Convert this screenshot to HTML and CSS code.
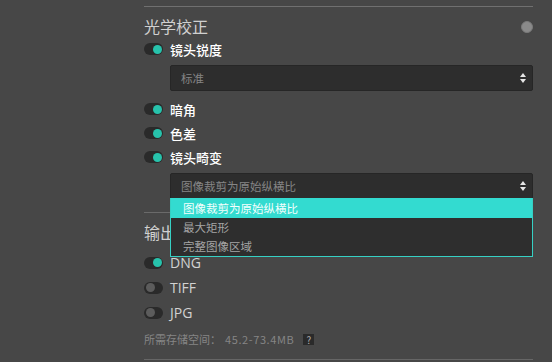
FILE: index.html
```html
<!DOCTYPE html>
<html lang="zh-CN">
<head>
    <meta charset="UTF-8">
    <meta name="viewport" content="width=device-width, initial-scale=1.0">
    <title>导出设置</title>
    <link rel="stylesheet" href="styles.css">
</head>
<body>
  <div class="panel">
    <div class="rule"></div>

    <div class="section_head">
      <h2>光学校正</h2>
      <span class="help_dot"></span>
    </div>

    <div class="row">
      <span class="toggle on"></span>
      <span class="label">镜头锐度</span>
    </div>
    <div class="select">
      <span>标准</span>
      <svg class="arrows" width="6" height="10" viewBox="0 0 6 10"><path d="M3 0 L6 4 H0 Z M3 10 L0 6 H6 Z" fill="#e6e6e6"/></svg>
    </div>

    <div class="row first">
      <span class="toggle on"></span>
      <span class="label">暗角</span>
    </div>
    <div class="row">
      <span class="toggle on"></span>
      <span class="label">色差</span>
    </div>
    <div class="row">
      <span class="toggle on"></span>
      <span class="label">镜头畸变</span>
    </div>
    <div class="select open">
      <span>图像裁剪为原始纵横比</span>
      <svg class="arrows" width="6" height="10" viewBox="0 0 6 10"><path d="M3 0 L6 4 H0 Z M3 10 L0 6 H6 Z" fill="#e6e6e6"/></svg>
      <ul class="menu">
        <li class="active">图像裁剪为原始纵横比</li>
        <li>最大矩形</li>
        <li>完整图像区域</li>
      </ul>
    </div>

    <div class="rule mid"></div>
    <div class="section_head">
      <h2>输出</h2>
    </div>

    <div class="row wide">
      <span class="toggle on"></span>
      <span class="label latin">DNG</span>
    </div>
    <div class="row wide">
      <span class="toggle"></span>
      <span class="label latin">TIFF</span>
    </div>
    <div class="row wide">
      <span class="toggle"></span>
      <span class="label latin">JPG</span>
    </div>

    <p class="storage">所需存储空间： <span class="size">45.2-73.4MB</span> <span class="qbox">?</span></p>

    <div class="rule bottom"></div>
  </div>
</body>
</html>
```

FILE: styles.css
```css
* {
  margin: 0;
  padding: 0;
  box-sizing: border-box;
}

body {
  width: 552px;
  height: 362px;
  overflow: hidden;
  background-color: #474747;
  font-family: "Noto Sans CJK SC", "Noto Sans", sans-serif;
  color: #e8e8e8;
}

.panel {
  margin-left: 144px;
  width: 389px;
  padding-top: 6px;
}

.rule {
  height: 1px;
  background-color: #707070;
}
.rule.mid {
  margin-top: 13px;
  background-color: #6a6a6a;
}
.rule.bottom {
  margin-top: 11px;
  background-color: #666;
}

.section_head {
  margin-top: 8px;
  height: 22px;
  display: flex;
  align-items: center;
  justify-content: space-between;
}
.section_head h2 {
  font-size: 16px;
  font-weight: normal;
  line-height: 22px;
  color: #d0d0d0;
}
.help_dot {
  width: 12px;
  height: 12px;
  border-radius: 50%;
  background-color: #8a8a8a;
  border: 1px solid #7a7a7a;
  margin-top: 1px;
}

.row {
  height: 24px;
  display: flex;
  align-items: center;
  gap: 7px;
}
.row.first {
  margin-top: 6px;
}
.row.wide {
  height: 25px;
}
.section_head + .row.wide {
  margin-top: 7px;
}

.toggle {
  position: relative;
  width: 19px;
  height: 12px;
  border-radius: 6px;
  background-color: #2a2a2a;
}
.toggle::after {
  content: "";
  position: absolute;
  top: 1.5px;
  left: 1.5px;
  width: 9px;
  height: 9px;
  border-radius: 50%;
  background-color: #5c5c5c;
}
.toggle.on::after {
  left: auto;
  right: 1px;
  background-color: #27c3ac;
}

.label {
  font-size: 13px;
  font-weight: 500;
  color: #ffffff;
}
.label.latin {
  font-family: "Open Sans", "Noto Sans", sans-serif;
  font-size: 14px;
  font-weight: normal;
  color: #d2d2d2;
}

.select {
  position: relative;
  margin-top: 4px;
  margin-left: 26px;
  height: 26px;
  padding: 0 6px 0 10px;
  display: flex;
  align-items: center;
  justify-content: space-between;
  background-color: #2d2d2d;
  border: 1px solid #262626;
  border-radius: 2px;
  font-size: 11.5px;
  color: #858585;
}
.select.open {
  border-radius: 2px 2px 0 0;
}

.menu {
  position: absolute;
  top: 24px;
  left: -1px;
  right: -1px;
  list-style: none;
  background-color: #2e2e2e;
  border: 1px solid #36d0c4;
  border-top: none;
  z-index: 2;
}
.menu li {
  height: 19px;
  line-height: 19px;
  padding-left: 12px;
  font-size: 11.5px;
  color: #a5a5a5;
}
.menu li.active {
  height: 20px;
  line-height: 20px;
  background-color: #33dbd0;
  color: #f2fffd;
}

.storage {
  margin-top: 5px;
  height: 18px;
  display: flex;
  align-items: center;
  font-size: 11px;
  color: #858585;
}
.storage .size {
  margin-left: 4px;
  letter-spacing: 0.6px;
}
.storage .qbox {
  margin-left: 9px;
  width: 11px;
  height: 11px;
  line-height: 11px;
  text-align: center;
  font-size: 10px;
  background-color: #2a2a2a;
  color: #b0b0b0;
}
```
